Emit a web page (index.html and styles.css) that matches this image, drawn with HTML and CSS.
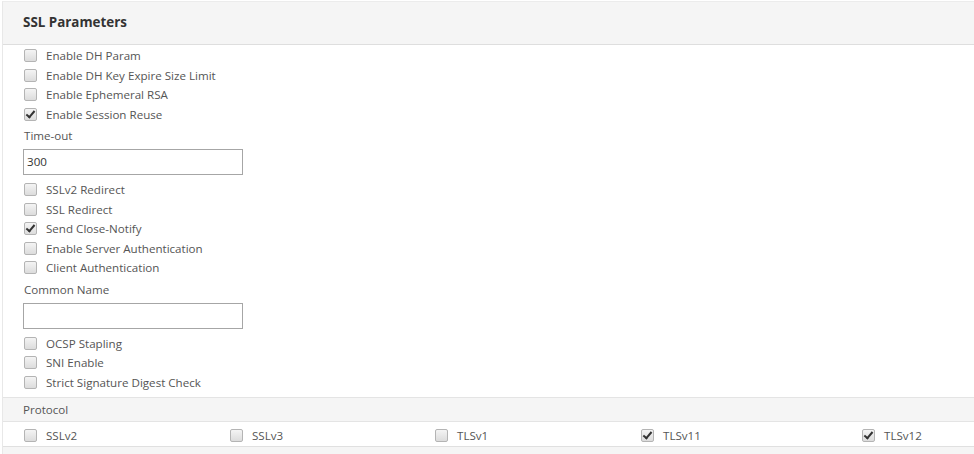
FILE: index.html
```html
<!DOCTYPE html>
<html>
<head>
<meta charset="utf-8">
<link rel="stylesheet" href="styles.css">
</head>
<body>
<div class="panel">
  <div class="panel-head">SSL Parameters</div>
  <div class="panel-body">
    <label class="cb-row"><span class="cb"></span>Enable DH Param</label>
    <label class="cb-row"><span class="cb"></span>Enable DH Key Expire Size Limit</label>
    <label class="cb-row"><span class="cb"></span>Enable Ephemeral RSA</label>
    <label class="cb-row"><span class="cb checked"></span>Enable Session Reuse</label>
    <div class="field-label">Time-out</div>
    <div class="input">300</div>
    <div class="group">
      <label class="cb-row"><span class="cb"></span>SSLv2 Redirect</label>
      <label class="cb-row"><span class="cb"></span>SSL Redirect</label>
      <label class="cb-row"><span class="cb checked"></span>Send Close-Notify</label>
      <label class="cb-row"><span class="cb"></span>Enable Server Authentication</label>
      <label class="cb-row"><span class="cb"></span>Client Authentication</label>
    </div>
    <div class="field-label">Common Name</div>
    <div class="input"></div>
    <div class="group">
      <label class="cb-row"><span class="cb"></span>OCSP Stapling</label>
      <label class="cb-row"><span class="cb"></span>SNI Enable</label>
      <label class="cb-row"><span class="cb"></span>Strict Signature Digest Check</label>
    </div>
  </div>
  <div class="sub-head">Protocol</div>
  <div class="proto-row">
    <label class="cb-row"><span class="cb"></span>SSLv2</label>
    <label class="cb-row"><span class="cb"></span>SSLv3</label>
    <label class="cb-row"><span class="cb"></span>TLSv1</label>
    <label class="cb-row"><span class="cb checked"></span>TLSv11</label>
    <label class="cb-row"><span class="cb checked"></span>TLSv12</label>
  </div>
  <div class="foot"></div>
</div>
</body>
</html>
```
FILE: styles.css
```css
html, body {
  margin: 0;
  padding: 0;
  background: #ffffff;
}
body {
  font-family: "Open Sans", "DejaVu Sans", sans-serif;
  font-size: 11.6px;
  color: #555555;
  width: 974px;
  height: 454px;
  overflow: hidden;
}
.panel {
  margin: 1px 0 0 2px;
  border-left: 1px solid #e8e8e8;
  border-top: 1px solid #ececec;
}
.panel-head {
  height: 42px;
  line-height: 41px;
  padding-left: 20px;
  background: #f5f5f5;
  border-bottom: 1px solid #dedede;
  font-weight: bold;
  font-size: 13.4px;
  color: #333;
}
.panel-body {
  padding: 1px 0 5px 21px;
}
.cb-row {
  display: flex;
  align-items: center;
  height: 19.5px;
  white-space: nowrap;
}
.cb {
  box-sizing: border-box;
  width: 13px;
  height: 13px;
  border: 1px solid #b4b4b4;
  border-radius: 2px;
  background: linear-gradient(#f4f4f4, #dcdcdc);
  margin-right: 9px;
  position: relative;
  flex: none;
}
.cb.checked::after {
  content: "";
  position: absolute;
  left: 3px;
  top: 0px;
  width: 3px;
  height: 7px;
  border-right: 2.5px solid #333;
  border-bottom: 2.5px solid #333;
  transform: rotate(40deg);
}
.field-label {
  margin-top: 3px;
  line-height: 18px;
}
.input {
  box-sizing: border-box;
  width: 220px;
  height: 26px;
  margin: 4px 0 0 -1px;
  border: 1px solid #a6a6a6;
  padding-left: 3px;
  line-height: 24px;
  color: #333;
}
.group {
  margin-top: 5px;
}
.sub-head {
  height: 23px;
  line-height: 23px;
  padding-left: 20px;
  background: #f5f5f5;
  border-top: 1px solid #e4e4e4;
  border-bottom: 1px solid #e4e4e4;
}
.proto-row {
  display: grid;
  grid-template-columns: 206px 205px 206px 221px 1fr;
  padding: 4px 0 0 21px;
  height: 20px;
  border-bottom: 1px solid #e0e0e0;
}
.foot {
  height: 12px;
  background: #f5f5f5;
}
```
